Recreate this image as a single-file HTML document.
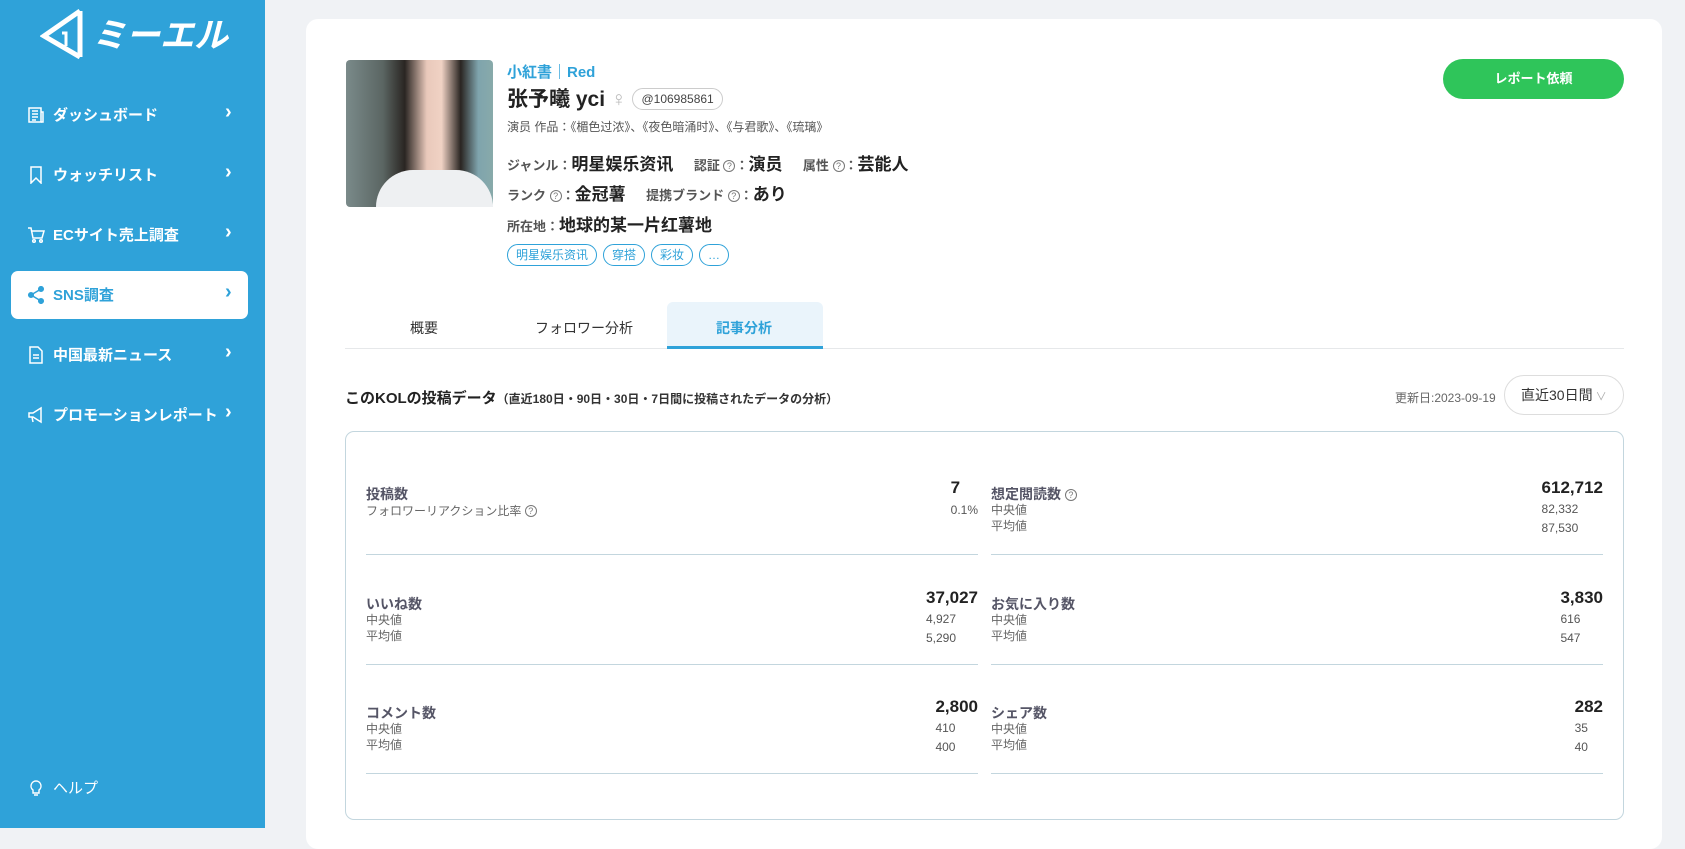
<!DOCTYPE html>
<html><head><meta charset="utf-8"><style>
*{box-sizing:border-box;margin:0;padding:0}
body{width:1685px;height:828px;overflow:hidden;background:#f0f2f5;font-family:"Liberation Sans","Noto Sans CJK JP",sans-serif;color:#222;position:relative}
.abs{position:absolute}
#side{position:absolute;left:0;top:0;width:265px;height:828px;background:#2fa2d9}
.mi{position:absolute;left:11px;width:237px;height:48px;color:#fff;font-weight:bold;font-size:15px}
.mi .ic{position:absolute;left:16px;top:15px;width:18px;height:18px}
.mi .tx{position:absolute;left:42px;top:13px;white-space:nowrap}
.mi .ch{position:absolute;left:214px;top:10px;font-size:20px;font-weight:bold}
.mi.act{background:#fff;border-radius:7px;color:#2fa2d9}
#card{position:absolute;left:306px;top:19px;width:1356px;height:830px;background:#fff;border-radius:12px}
.lbl{font-size:13px;color:#555;font-weight:bold}
.val{font-size:17px;font-weight:bold;color:#222}
.q{display:inline-block;width:12px;height:12px;border:1px solid #777;border-radius:50%;font-size:9px;line-height:10px;text-align:center;color:#777;vertical-align:1px;font-weight:normal}
.tag{display:inline-block;height:22px;border:1px solid #2fa2d9;border-radius:11px;padding:0 8px;font-size:12px;line-height:20px;color:#2fa2d9;margin-right:6px}
.stat{position:absolute;width:612px;height:71px;border-bottom:1px solid #c3d6de}
.stat .t{position:absolute;left:0;top:0;font-size:14px;font-weight:bold;color:#556}
.stat .s{position:absolute;left:0;font-size:12px;color:#666}
.stat .r{position:absolute;right:0;top:-6px;text-align:left}
.stat .big{font-size:17px;font-weight:bold;color:#222}
.stat .sm{font-size:12px;color:#555;line-height:17px}
</style></head><body>
<div id="side">
  <svg class="abs" style="left:40px;top:8px" width="44" height="52" viewBox="0 0 44 52"><path d="M40 3 L4 28 L40 49" fill="none" stroke="#fff" stroke-width="5" stroke-linejoin="miter"/><path d="M40 3 V49" stroke="#fff" stroke-width="5"/><path d="M22 25 L26 25 L26 38" stroke="#fff" stroke-width="3" fill="none"/></svg>
  <div class="abs" style="left:92px;top:8px;color:#fff;font-size:34px;font-weight:bold;font-style:italic">ミーエル</div>
  <div class="mi" style="top:91px"><svg class="ic" viewBox="0 0 18 18" fill="none" stroke="#fff" stroke-width="1.5"><rect x="2" y="2" width="12" height="14"/><path d="M14 6h2v10h-2M5 5h6M5 8h6M5 11h6M5 14h4"/></svg><span class="tx">ダッシュボード</span><span class="ch">›</span></div>
  <div class="mi" style="top:151px"><svg class="ic" viewBox="0 0 18 18" fill="none" stroke="#fff" stroke-width="1.5"><path d="M4 1h10v16l-5-5-5 5z"/></svg><span class="tx">ウォッチリスト</span><span class="ch">›</span></div>
  <div class="mi" style="top:211px"><svg class="ic" viewBox="0 0 18 18" fill="none" stroke="#fff" stroke-width="1.5"><path d="M1 2h3l2 10h9l2-7H5"/><circle cx="7" cy="15" r="1.3"/><circle cx="14" cy="15" r="1.3"/></svg><span class="tx">ECサイト売上調査</span><span class="ch">›</span></div>
  <div class="mi act" style="top:271px"><svg class="ic" viewBox="0 0 18 18" fill="#2fa2d9" stroke="#2fa2d9" stroke-width="1.5"><circle cx="4" cy="9" r="2.3"/><circle cx="14" cy="3" r="2.3"/><circle cx="14" cy="15" r="2.3"/><path d="M4 9L14 3M4 9L14 15"/></svg><span class="tx">SNS調査</span><span class="ch">›</span></div>
  <div class="mi" style="top:331px"><svg class="ic" viewBox="0 0 18 18" fill="none" stroke="#fff" stroke-width="1.5"><path d="M3 1h8l4 4v12H3z M6 9h6M6 12h6"/></svg><span class="tx">中国最新ニュース</span><span class="ch">›</span></div>
  <div class="mi" style="top:391px"><svg class="ic" viewBox="0 0 18 18" fill="none" stroke="#fff" stroke-width="1.5"><path d="M2 7h4l8-5v14l-8-5H2z M5 11l1 5"/></svg><span class="tx">プロモーションレポート</span><span class="ch">›</span></div>
  <div class="mi" style="top:764px"><svg class="ic" viewBox="0 0 18 18" fill="none" stroke="#fff" stroke-width="1.4"><path d="M9 2a5 5 0 0 0-3 9v3h6v-3a5 5 0 0 0-3-9zM7 16h4"/></svg><span class="tx" style="font-weight:normal">ヘルプ</span></div>
</div>
<div id="card">
  <div class="abs" style="left:40px;top:41px;width:147px;height:147px;border-radius:4px;background:linear-gradient(90deg,#7a8a8a 0%,#5b6663 25%,#2a2522 40%,#e9c9bb 55%,#f0d2c4 65%,#2a2522 78%,#7fa4ad 90%,#8aa 100%)"><div class="abs" style="left:30px;top:110px;width:117px;height:37px;background:#eef0f2;border-radius:40px 40px 0 0"></div></div>
  <div class="abs" style="left:201px;top:42px;font-size:15px;color:#2fa2d9;font-weight:bold">小紅書｜Red</div>
  <div class="abs" style="left:201px;top:64px;font-size:21px;font-weight:bold;white-space:nowrap">张予曦 yci <span style="color:#bbb;font-weight:normal">♀</span> <span style="display:inline-block;border:1px solid #ccc;border-radius:11px;padding:0 8px;font-size:12px;font-weight:normal;color:#444;height:22px;line-height:20px;vertical-align:3px">@106985861</span></div>
  <div class="abs" style="left:201px;top:99px;font-size:12px;color:#555">演员 作品：《楣色过浓》、《夜色暗涌时》、《与君歌》、《琉璃》</div>
  <div class="abs" style="left:201px;top:131px;white-space:nowrap"><span class="lbl">ジャンル：</span><span class="val">明星娱乐资讯</span>　 <span class="lbl">認証 <span class="q">?</span>：</span><span class="val">演员</span>　 <span class="lbl">属性 <span class="q">?</span>：</span><span class="val">芸能人</span></div>
  <div class="abs" style="left:201px;top:161px;white-space:nowrap"><span class="lbl">ランク <span class="q">?</span>：</span><span class="val">金冠薯</span>　 <span class="lbl">提携ブランド <span class="q">?</span>：</span><span class="val">あり</span></div>
  <div class="abs" style="left:201px;top:192px;white-space:nowrap"><span class="lbl">所在地：</span><span class="val">地球的某一片红薯地</span></div>
  <div class="abs" style="left:201px;top:225px;white-space:nowrap"><span class="tag">明星娱乐资讯</span><span class="tag">穿搭</span><span class="tag">彩妆</span><span class="tag">…</span></div>
  <div class="abs" style="left:1137px;top:40px;width:181px;height:40px;border-radius:20px;background:#2fc55a;color:#fff;font-size:13px;font-weight:bold;text-align:center;line-height:40px">レポート依頼</div>
  <div class="abs" style="left:39px;top:329px;width:1279px;height:1px;background:#e6e8ea"></div>
  <div class="abs" style="left:361px;top:283px;width:156px;height:47px;background:#eaf4fb;border-radius:6px 6px 0 0;border-bottom:3px solid #2fa2d9"></div>
  <div class="abs" style="left:104px;top:299px;font-size:14px;color:#333">概要</div>
  <div class="abs" style="left:229px;top:299px;font-size:14px;color:#333">フォロワー分析</div>
  <div class="abs" style="left:410px;top:299px;font-size:14px;color:#2fa2d9;font-weight:bold">記事分析</div>
  <div class="abs" style="left:39px;top:368px;white-space:nowrap"><span style="font-size:15px;font-weight:bold">このKOLの投稿データ</span><span style="font-size:12px;font-weight:bold;color:#333">（直近180日・90日・30日・7日間に投稿されたデータの分析）</span></div>
  <div class="abs" style="left:1089px;top:370px;font-size:12px;color:#666">更新日:2023-09-19</div>
  <div class="abs" style="left:1198px;top:356px;width:120px;height:40px;border:1px solid #ddd;border-radius:20px;font-size:14px;line-height:38px;padding-left:16px;color:#333">直近30日間<span style="color:#aaa;font-size:11px"> ∨</span></div>
  <div class="abs" style="left:39px;top:412px;width:1279px;height:389px;border:1px solid #c3d6de;border-radius:9px">
    <div class="stat" style="left:20px;top:52px"><div class="t">投稿数</div><div class="s" style="top:18px">フォロワーリアクション比率 <span class="q">?</span></div><div class="r"><div class="big">7</div><div class="sm" style="margin-top:4px">0.1%</div></div></div>
    <div class="stat" style="left:645px;top:52px"><div class="t">想定閲読数 <span class="q">?</span></div><div class="s" style="top:17px">中央値</div><div class="s" style="top:33px">平均値</div><div class="r"><div class="big">612,712</div><div class="sm" style="margin-top:3px">82,332</div><div class="sm" style="margin-top:2px">87,530</div></div></div>
    <div class="stat" style="left:20px;top:162px"><div class="t">いいね数</div><div class="s" style="top:17px">中央値</div><div class="s" style="top:33px">平均値</div><div class="r"><div class="big">37,027</div><div class="sm" style="margin-top:3px">4,927</div><div class="sm" style="margin-top:2px">5,290</div></div></div>
    <div class="stat" style="left:645px;top:162px"><div class="t">お気に入り数</div><div class="s" style="top:17px">中央値</div><div class="s" style="top:33px">平均値</div><div class="r"><div class="big">3,830</div><div class="sm" style="margin-top:3px">616</div><div class="sm" style="margin-top:2px">547</div></div></div>
    <div class="stat" style="left:20px;top:271px"><div class="t">コメント数</div><div class="s" style="top:17px">中央値</div><div class="s" style="top:33px">平均値</div><div class="r"><div class="big">2,800</div><div class="sm" style="margin-top:3px">410</div><div class="sm" style="margin-top:2px">400</div></div></div>
    <div class="stat" style="left:645px;top:271px"><div class="t">シェア数</div><div class="s" style="top:17px">中央値</div><div class="s" style="top:33px">平均値</div><div class="r"><div class="big">282</div><div class="sm" style="margin-top:3px">35</div><div class="sm" style="margin-top:2px">40</div></div></div>
  </div>
</div>
</body></html>
